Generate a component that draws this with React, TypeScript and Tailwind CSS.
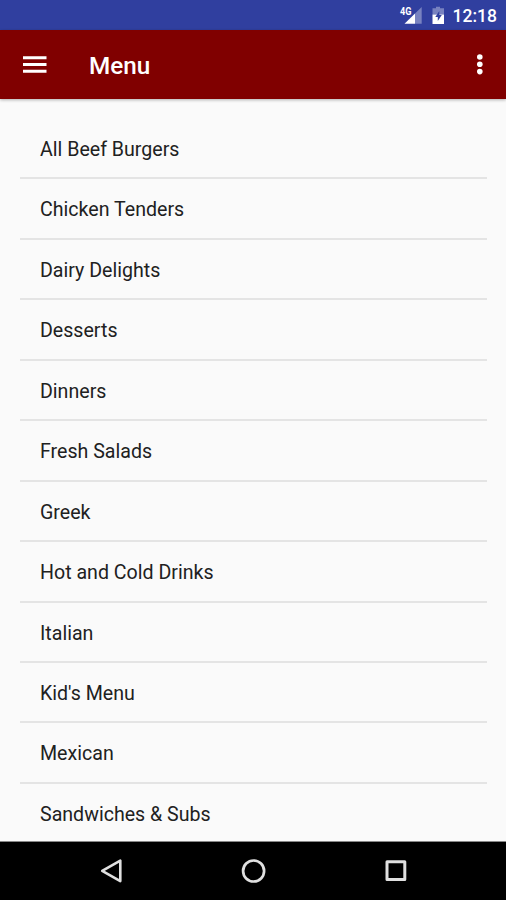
import React, { useState } from 'react';

const menuItems = [
  'All Beef Burgers',
  'Chicken Tenders',
  'Dairy Delights',
  'Desserts',
  'Dinners',
  'Fresh Salads',
  'Greek',
  'Hot and Cold Drinks',
  'Italian',
  "Kid's Menu",
  'Mexican',
  'Sandwiches & Subs',
];

const StatusBar = () => (
  <div className="flex h-[30px] shrink-0 items-center justify-end bg-[#303f9f] pr-[9px] text-white">
    <svg width="24" height="20" viewBox="0 0 24 20" className="mr-[8px]">
      <text x="1" y="9.600" fontSize="10" fontWeight="700" fontFamily="Roboto, sans-serif" fill="#fff" textLength="11.500" lengthAdjust="spacingAndGlyphs">4G</text>
      <path d="M22.700 2v16.700H16V8.500z" fill="#fff" fillOpacity="0.35" />
      <path d="M16 8.500v10.200H5.500z" fill="#fff" />
    </svg>
    <svg width="14" height="20" viewBox="0 0 14 20" className="mr-[8px]">
      <path d="M5 1.800h4v1.500h4v6.200H1.500V3.300H5z" fill="#fff" fillOpacity="0.35" />
      <path d="M1.500 9.500H13V19H1.500z" fill="#fff" />
      <path d="M8.300 6l-4 6h2.500v4l4-6H8.300z" fill="#303f9f" />
    </svg>
    <span className="pt-[3px] text-[17.500px] leading-none font-medium">12:18</span>
  </div>
);

const AppBar = ({ title, onToggle }: { title: string; onToggle: () => void }) => (
  <header className="z-10 flex h-[69px] shrink-0 items-center bg-[#800000] px-[23px] text-white shadow-[0_1px_3px_rgba(0,0,0,0.3)]">
    <button onClick={onToggle} aria-label="Open menu" className="mr-[42px]">
      <svg width="24" height="18" viewBox="0 0 24 18" fill="#fff">
        <path d="M0 0.300h23.500v3H0zM0 7h23.500v3H0zM0 13.700h23.500v3H0z" />
      </svg>
    </button>
    <h1 className="grow pt-[2px] text-[24.300px] leading-8 font-medium">{title}</h1>
    <button aria-label="More options">
      <svg width="6" height="21" viewBox="0 0 6 21" fill="#fff">
        <circle cx="2.800" cy="3" r="2.800" />
        <circle cx="2.800" cy="10.300" r="2.800" />
        <circle cx="2.800" cy="17.600" r="2.800" />
      </svg>
    </button>
  </header>
);

const NavBar = () => (
  <nav className="flex h-[58px] shrink-0 items-center justify-between bg-black pr-[97px] pl-[99px]">
    <svg width="26" height="26" viewBox="0 0 26 26" fill="none" stroke="#e0e0e0" strokeWidth="2.600" strokeLinejoin="round">
      <path d="M21.300 2.700v20.400L3.200 12.900z" />
    </svg>
    <svg width="26" height="26" viewBox="0 0 26 26" fill="none" stroke="#e0e0e0" strokeWidth="2.700">
      <circle cx="12.600" cy="13" r="10.500" />
    </svg>
    <svg width="26" height="26" viewBox="0 0 26 26" fill="none" stroke="#e0e0e0" strokeWidth="3" strokeLinejoin="round">
      <path d="M4 3.700h17.800v17.800H4z" />
    </svg>
  </nav>
);

const App = () => {
  const [open, setOpen] = useState(false);

  return (
    <div className="flex h-[900px] w-[506px] flex-col overflow-hidden bg-[#fafafa] font-[Roboto,sans-serif]">
      <StatusBar />
      <AppBar title="Menu" onToggle={() => setOpen(!open)} />
      <main className="min-h-0 grow overflow-hidden border-b border-[#888] px-5 pt-[20px]">
        <ul className="mr-[-1px]">
          {menuItems.map((item) => (
            <li key={item} className="flex h-[60.450px] items-center border-b-2 border-[#e4e4e4] pt-[3px] pl-5 text-[19.600px] text-[#212121]">
              {item}
            </li>
          ))}
        </ul>
      </main>
      <NavBar />
    </div>
  );
};

export default App;
